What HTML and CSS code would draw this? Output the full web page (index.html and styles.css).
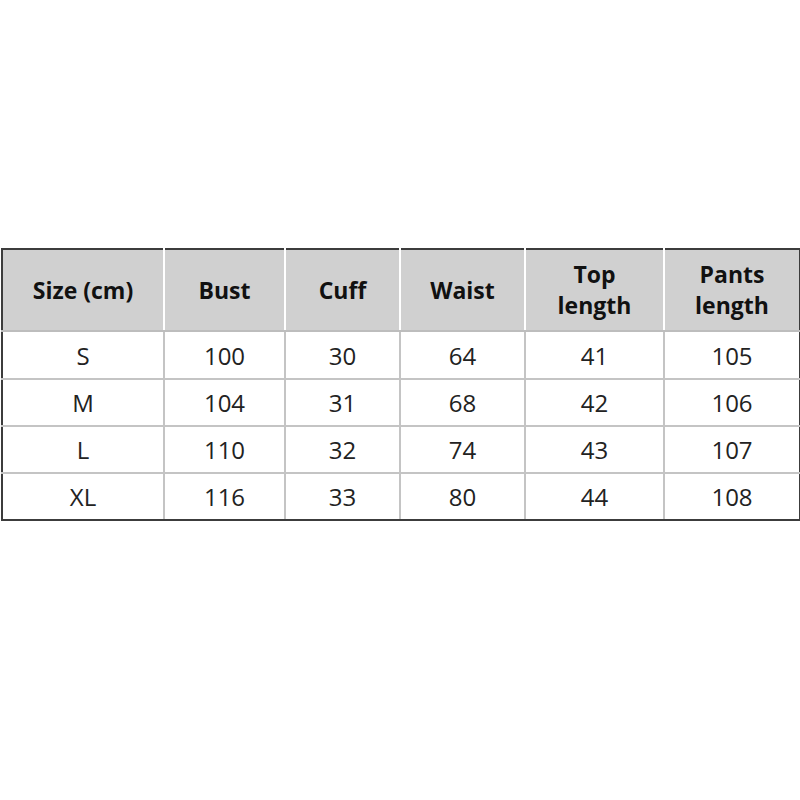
FILE: index.html
```html
<!DOCTYPE html>
<html>
<head>
<meta charset="utf-8">
<link rel="stylesheet" href="styles.css">
</head>
<body>
<div class="page">
<table class="sizes">
  <colgroup>
    <col class="c1"><col class="c2"><col class="c3"><col class="c4"><col class="c5"><col class="c6">
  </colgroup>
  <thead>
    <tr>
      <th>Size (cm)</th><th>Bust</th><th>Cuff</th><th>Waist</th><th>Top<br>length</th><th>Pants<br>length</th>
    </tr>
  </thead>
  <tbody>
    <tr><td>S</td><td>100</td><td>30</td><td>64</td><td>41</td><td>105</td></tr>
    <tr><td>M</td><td>104</td><td>31</td><td>68</td><td>42</td><td>106</td></tr>
    <tr><td>L</td><td>110</td><td>32</td><td>74</td><td>43</td><td>107</td></tr>
    <tr><td>XL</td><td>116</td><td>33</td><td>80</td><td>44</td><td>108</td></tr>
  </tbody>
</table>
</div>
</body>
</html>
```

FILE: styles.css
```css
html, body {
  margin: 0;
  padding: 0;
  background: #ffffff;
}
.page {
  padding-top: 248px;
  padding-left: 1px;
}
.sizes {
  border-collapse: collapse;
  width: 798px;
  table-layout: fixed;
  border: 2px solid #3c3c3c;
  font-family: "Open Sans", "Liberation Sans", sans-serif;
  color: #222;
}
.c1 { width: 162px; }
.c2 { width: 121px; }
.c3 { width: 115px; }
.c4 { width: 125px; }
.c5 { width: 139px; }
.c6 { width: 136px; }
.sizes th {
  background: #d0d0d0;
  height: 80px;
  font-weight: 700;
  font-size: 23px;
  line-height: 31px;
  color: #111;
  text-align: center;
  padding: 0;
  border-left: 2px solid #ffffff;
  border-bottom: 2px solid #bdbdbd;
}
.sizes th:first-child { border-left: none; }
.sizes td {
  height: 45px;
  font-size: 24px;
  text-align: center;
  padding: 0;
  border: 2px solid #c4c4c4;
}
.sizes tbody tr:first-child td { height: 46px; }
.sizes td:first-child { border-left-color: #3c3c3c; }
.sizes td:last-child { border-right-color: #3c3c3c; }
.sizes tr:last-child td { border-bottom-color: #3c3c3c; }
```
